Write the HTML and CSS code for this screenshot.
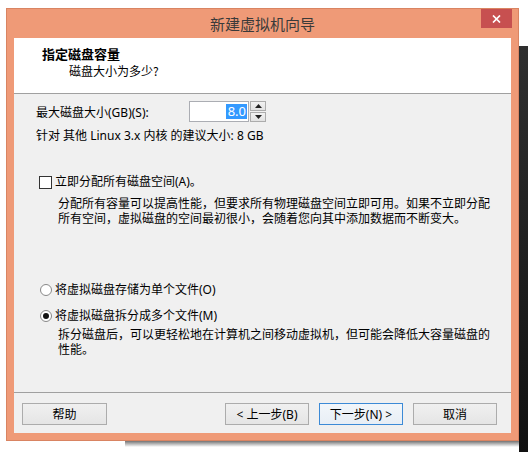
FILE: index.html
```html
<!DOCTYPE html>
<html lang="zh-CN">
<head>
<meta charset="utf-8">
<title>新建虚拟机向导</title>
<link rel="stylesheet" href="styles.css">
</head>
<body>
<div class="window">
  <div class="titlebar">
    <span class="tb-spacer"></span>
    <div class="title">新建虚拟机向导</div>
    <div class="tb-right">
      <div class="close"><svg width="9" height="8" viewBox="0 0 9 8"><path d="M1 0.5L8 7.5M8 0.5L1 7.5" stroke="#fff" stroke-width="1.7"/></svg></div>
    </div>
  </div>
  <div class="client">
    <div class="header">
      <div class="h-title">指定磁盘容量</div>
      <div class="h-sub">磁盘大小为多少?</div>
    </div>
    <div class="body">
      <div class="size-row">
        <span class="size-label">最大磁盘大小(GB)(S):</span>
        <div class="spin">
          <div class="spin-field"><span class="sel">8.0</span></div>
          <div class="spin-btns">
            <div class="spin-btn"><svg width="7" height="4" viewBox="0 0 7 4"><path d="M0 4L3.5 0L7 4Z" fill="#222"/></svg></div>
            <div class="spin-btn"><svg width="7" height="4" viewBox="0 0 7 4"><path d="M0 0L7 0L3.5 4Z" fill="#222"/></svg></div>
          </div>
        </div>
      </div>
      <div class="rec">针对 其他 Linux 3.x 内核 的建议大小: 8 GB</div>
      <div class="check-row"><span class="checkbox"></span><span>立即分配所有磁盘空间(A)。</span></div>
      <div class="desc desc1">分配所有容量可以提高性能，但要求所有物理磁盘空间立即可用。如果不立即分配<br>所有空间，虚拟磁盘的空间最初很小，会随着您向其中添加数据而不断变大。</div>
      <div class="radio-row r1"><span class="radio"></span><span>将虚拟磁盘存储为单个文件(O)</span></div>
      <div class="radio-row r2"><span class="radio on"></span><span>将虚拟磁盘拆分成多个文件(M)</span></div>
      <div class="desc desc2">拆分磁盘后，可以更轻松地在计算机之间移动虚拟机，但可能会降低大容量磁盘的<br>性能。</div>
    </div>
    <div class="footer">
      <button class="btn help">帮助</button>
      <div class="nav">
        <button class="btn">&lt; 上一步(B)</button>
        <button class="btn default">下一步(N) &gt;</button>
        <button class="btn">取消</button>
      </div>
    </div>
  </div>
</div>
</body>
</html>
```

FILE: styles.css
```css
html, body {
  margin: 0;
  padding: 0;
}
body {
  width: 528px;
  height: 452px;
  overflow: hidden;
  background:
    linear-gradient(#2f2f2f, #111) no-repeat right 0 top 46px / 9px 406px,
    linear-gradient(rgba(0,0,0,0.55), rgba(0,0,0,0)) no-repeat left 125px top 441px / 403px 6px,
    #ffffff;
  font-family: "Noto Sans", "Noto Sans CJK SC", sans-serif;
  font-size: 12px;
  color: #000;
}
.window {
  margin: 8px 0 0 6px;
  width: 513px;
  height: 433px;
  box-sizing: border-box;
  background: #ef9a77;
  border: 1px solid #d98462;
  padding: 0 7px 7px 7px;
  display: flex;
  flex-direction: column;
}
.titlebar {
  height: 29px;
  display: grid;
  grid-template-columns: 1fr auto 1fr;
  align-items: start;
}
.title {
  font-family: "Noto Sans CJK SC", sans-serif;
  font-size: 15px;
  line-height: 28px;
  color: #3a3a3a;
  padding-top: 1px;
}
.tb-right {
  display: flex;
  justify-content: flex-end;
}
.close {
  width: 31px;
  height: 19px;
  background: #c75050;
  display: flex;
  align-items: center;
  justify-content: center;
  margin-right: -1px;
}
.client {
  flex: 1;
  display: flex;
  flex-direction: column;
  background: #f0f0f0;
}
.header {
  height: 56px;
  box-sizing: border-box;
  background: #ffffff;
  border-bottom: 1px solid #a0a0a0;
  padding: 8px 0 0 28px;
  font-family: "Noto Sans CJK SC", sans-serif;
}
.h-title {
  font-weight: bold;
  font-size: 13px;
  line-height: 16px;
}
.h-sub {
  line-height: 18px;
  padding-left: 27px;
}
.body {
  flex: 1;
  padding: 7px 0 0 22px;
  display: flex;
  flex-direction: column;
}
.size-row {
  display: flex;
  align-items: center;
  height: 21px;
}
.size-label {
  width: 153px;
}
.spin {
  display: flex;
}
.spin-field {
  width: 60px;
  height: 21px;
  box-sizing: border-box;
  border: 1px solid #abadb3;
  background: #fff;
  display: flex;
  justify-content: flex-end;
  align-items: center;
  padding-right: 1px;
}
.sel {
  background: #3399ff;
  color: #fff;
  font-size: 13px;
  line-height: 15px;
  padding: 0 1px 0 2px;
}
.spin-btns {
  display: flex;
  flex-direction: column;
  margin-left: 1px;
}
.spin-btn {
  width: 16px;
  height: 10px;
  box-sizing: border-box;
  border: 1px solid #acacac;
  background: linear-gradient(#f2f2f2, #e2e2e2);
  display: flex;
  align-items: center;
  justify-content: center;
}
.spin-btn + .spin-btn {
  margin-top: 1px;
}
.rec {
  margin-top: 6px;
  line-height: 16px;
}
.check-row, .radio-row {
  display: flex;
  align-items: center;
  line-height: 16px;
}
.check-row {
  margin-top: 30px;
}
.checkbox {
  width: 13px;
  height: 13px;
  box-sizing: border-box;
  border: 1px solid #333;
  background: #fff;
  margin: 0 3px 0 3px;
}
.desc {
  line-height: 15px;
  padding-left: 22px;
}
.desc1 {
  margin-top: 6px;
}
.r1 {
  margin-top: 56px;
}
.r2 {
  margin-top: 10px;
}
.desc2 {
  margin-top: 3px;
}
.radio {
  width: 12px;
  height: 12px;
  box-sizing: border-box;
  border: 1px solid #888;
  border-radius: 50%;
  background: #fff;
  margin: 0 3px 0 4px;
  display: flex;
  align-items: center;
  justify-content: center;
}
.radio.on::after {
  content: "";
  width: 6px;
  height: 6px;
  border-radius: 50%;
  background: #111;
}
.footer {
  height: 41px;
  box-sizing: border-box;
  border-top: 1px solid #a0a0a0;
  padding: 10px 14px 0 8px;
  display: flex;
  justify-content: space-between;
  align-items: flex-start;
}
.nav {
  display: flex;
  gap: 10px;
}
.btn {
  width: 84px;
  height: 22px;
  box-sizing: border-box;
  border: 1px solid #acacac;
  background: linear-gradient(#f0f0f0, #e5e5e5);
  font-family: "Noto Sans", "Noto Sans CJK SC", sans-serif;
  font-size: 12px;
  color: #000;
  padding: 0;
  margin: 0;
}
.help {
  width: 85px;
}
.default {
  border-color: #3c8ad6;
  background: linear-gradient(#f2f6fa, #e8eef5);
}
```
